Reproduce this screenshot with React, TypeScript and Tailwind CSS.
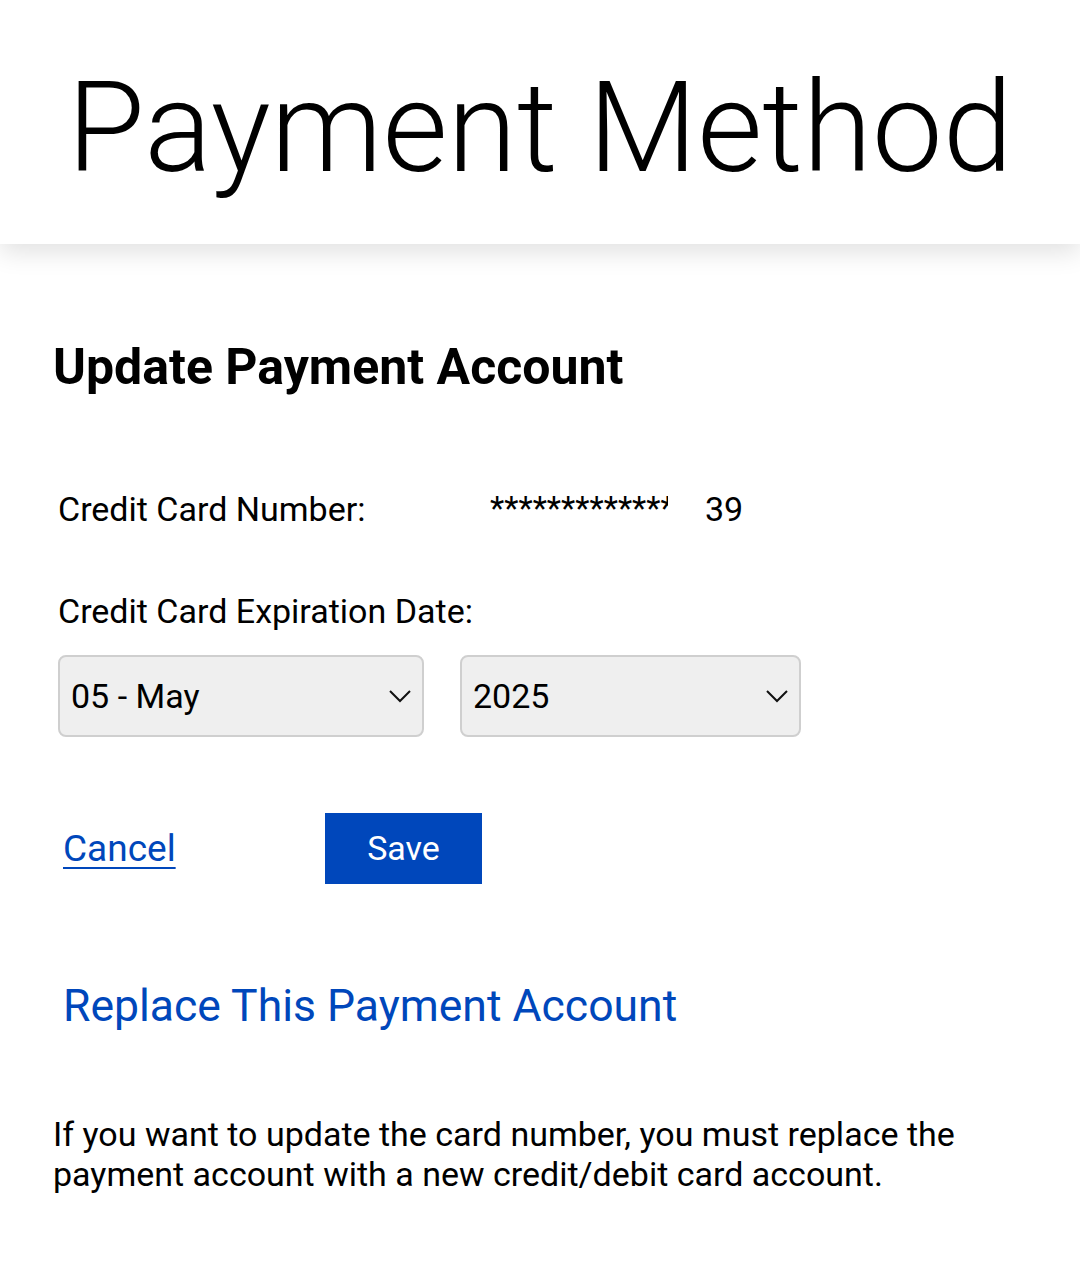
import React from "react";

function Chevron() {
  return (
    <svg width="24" height="14" viewBox="0 0 24 14" fill="none" className="shrink-0">
      <path d="M2 2 L12 12 L22 2" stroke="#111" strokeWidth="2" />
    </svg>
  );
}

export default function App() {
  return (
    <div className="min-h-[1275px] bg-white text-black" style={{ fontFamily: "Roboto, 'Noto Sans', sans-serif" }}>
      <header className="relative h-[244px] flex items-center justify-center bg-white shadow-[0_8px_24px_rgba(0,0,0,0.12)]">
        <h1 className="text-[126px] font-light leading-none mt-[12px]">Payment Method</h1>
      </header>
      <main className="pl-[53px] pr-[40px]">
        <h2 className="mt-[95px] text-[50px] font-bold leading-[56px]">Update Payment Account</h2>
        <div className="mt-[94px] pl-[5px] flex items-center text-[34px] leading-[40px]">
          <span className="w-[432px]">Credit Card Number:</span>
          <span className="w-[178px] overflow-hidden whitespace-nowrap text-[33px]">*************</span>
          <span className="ml-[37px]">39</span>
        </div>
        <div className="mt-[62px] pl-[5px] text-[34px] leading-[40px]">Credit Card Expiration Date:</div>
        <div className="mt-[24px] pl-[5px] flex gap-[36px]">
          <div className="w-[366px] h-[82px] rounded-[8px] border-2 border-[#cfcfcf] bg-[#efefef] flex items-center justify-between pl-[11px] pr-[10px] text-[34px]">
            <span>05 - May</span>
            <Chevron />
          </div>
          <div className="w-[341px] h-[82px] rounded-[8px] border-2 border-[#cfcfcf] bg-[#efefef] flex items-center justify-between pl-[11px] pr-[10px] text-[34px]">
            <span>2025</span>
            <Chevron />
          </div>
        </div>
        <div className="mt-[76px] pl-[10px] flex items-center">
          <a href="#" className="w-[262px] text-[37px] text-[#0047bb] underline underline-offset-[6px] decoration-2">Cancel</a>
          <button className="w-[157px] h-[71px] bg-[#0047bb] text-white text-[34px]">Save</button>
        </div>
        <div className="mt-[96px] pl-[10px] text-[44.5px] text-[#0047bb] leading-[52px]">Replace This Payment Account</div>
        <p className="mt-[82px] text-[34px] leading-[40px] max-w-[960px]">
          If you want to update the card number, you must replace the payment account with a new credit/debit card account.
        </p>
      </main>
    </div>
  );
}
